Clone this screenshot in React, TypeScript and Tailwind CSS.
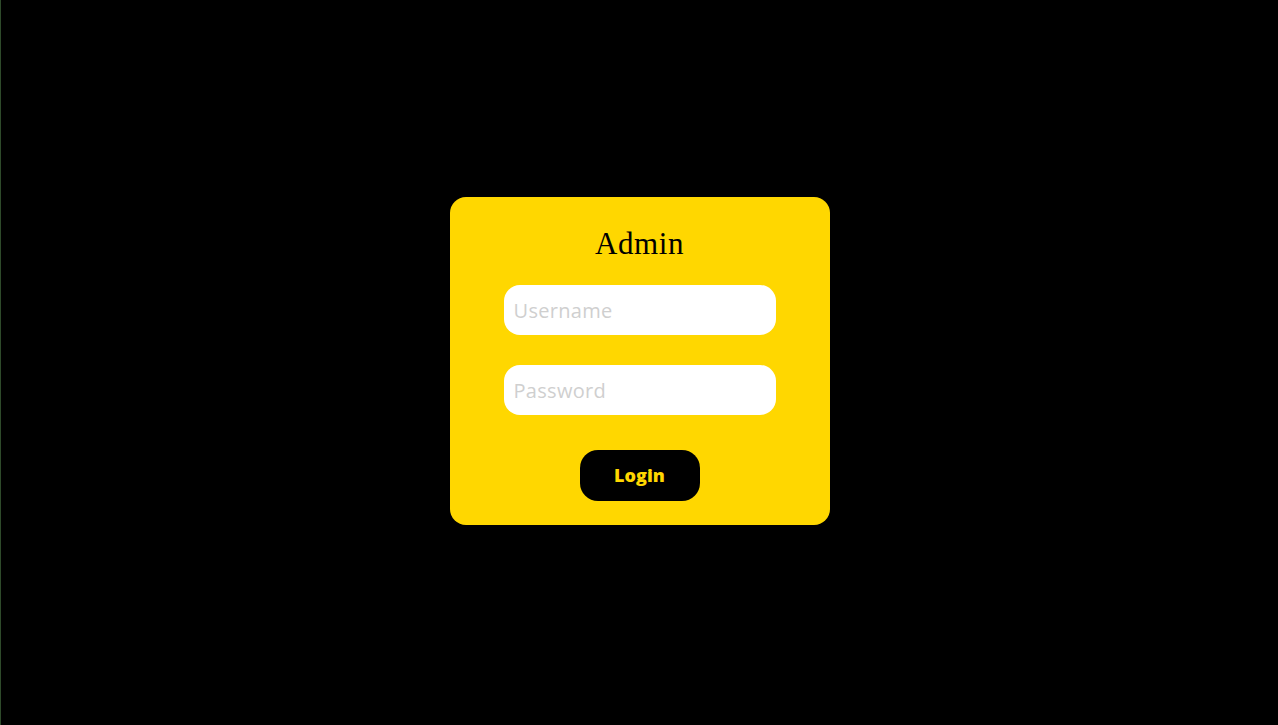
export default function App() {
  return (
    <div className="w-full h-[725px] bg-black border-l border-[#2e4a2a] flex items-center justify-center">
      <form
        onSubmit={(e) => e.preventDefault()}
        className="w-[380px] h-[328px] bg-[#ffd700] rounded-[16px] flex flex-col items-center pt-[25px] mt-[-3px]"
      >
        <h1 className="text-[31px] leading-[44px] text-black font-['Liberation_Serif',serif] tracking-[0.6px]">
          Admin
        </h1>
        <input
          type="text"
          placeholder="Username"
          className="mt-[19px] w-[272px] h-[50px] bg-white rounded-[16px] px-[10px] text-[20px] tracking-[0.3px] text-black placeholder:text-[#cfcfcf] outline-none font-['Open_Sans',sans-serif]"
        />
        <input
          type="password"
          placeholder="Password"
          className="mt-[30px] w-[272px] h-[50px] bg-white rounded-[16px] px-[10px] text-[20px] tracking-[0.3px] text-black placeholder:text-[#cfcfcf] outline-none font-['Open_Sans',sans-serif]"
        />
        <button
          type="submit"
          className="mt-[35px] w-[120px] h-[51px] bg-black rounded-[18px] text-[#ffd700] text-[18px] font-extrabold font-['Open_Sans',sans-serif]"
        >
          Login
        </button>
      </form>
    </div>
  );
}
